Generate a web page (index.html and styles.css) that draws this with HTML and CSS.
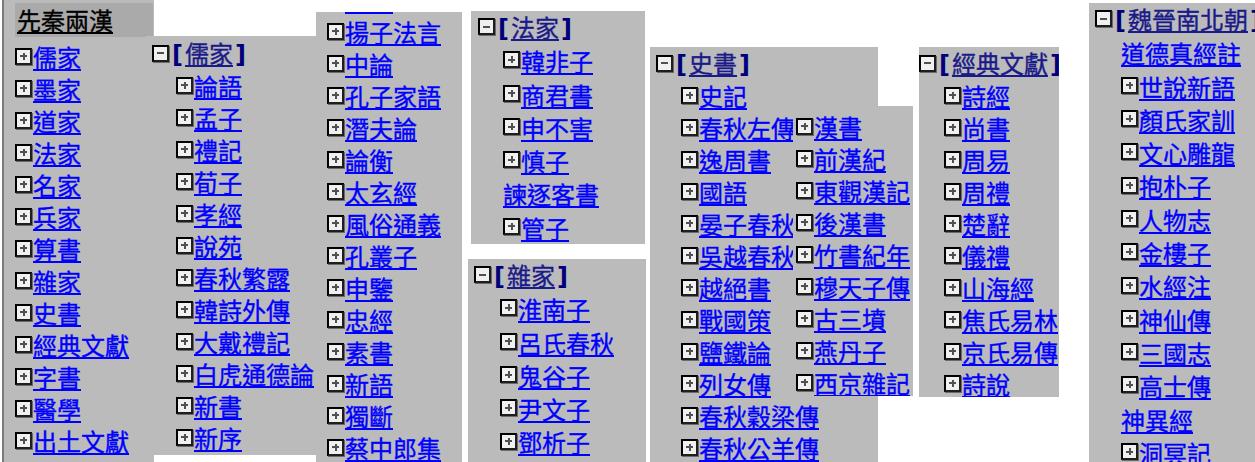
FILE: index.html
```html
<!DOCTYPE html>
<html lang="zh-Hant">
<head>
<meta charset="utf-8">
<title>先秦兩漢</title>
<link rel="stylesheet" href="styles.css">
</head>
<body>
<div class="stage">

  <div class="panel p-a">
    <div class="era"><a class="era-link">先秦兩漢</a></div>
    <div class="list">
      <div class="row"><span class="box plus"></span><a>儒家</a></div>
      <div class="row"><span class="box plus"></span><a>墨家</a></div>
      <div class="row"><span class="box plus"></span><a>道家</a></div>
      <div class="row"><span class="box plus"></span><a>法家</a></div>
      <div class="row"><span class="box plus"></span><a>名家</a></div>
      <div class="row"><span class="box plus"></span><a>兵家</a></div>
      <div class="row"><span class="box plus"></span><a>算書</a></div>
      <div class="row"><span class="box plus"></span><a>雜家</a></div>
      <div class="row"><span class="box plus"></span><a>史書</a></div>
      <div class="row"><span class="box plus"></span><a>經典文獻</a></div>
      <div class="row"><span class="box plus"></span><a>字書</a></div>
      <div class="row"><span class="box plus"></span><a>醫學</a></div>
      <div class="row"><span class="box plus"></span><a>出土文獻</a></div>
    </div>
  </div>

  <div class="panel p-b">
    <div class="row head"><span class="box minus"></span><b class="br">[<a>儒家</a>]</b></div>
    <div class="sub">
      <div class="row"><span class="box plus"></span><a>論語</a></div>
      <div class="row"><span class="box plus"></span><a>孟子</a></div>
      <div class="row"><span class="box plus"></span><a>禮記</a></div>
      <div class="row"><span class="box plus"></span><a>荀子</a></div>
      <div class="row"><span class="box plus"></span><a>孝經</a></div>
      <div class="row"><span class="box plus"></span><a>說苑</a></div>
      <div class="row"><span class="box plus"></span><a>春秋繁露</a></div>
      <div class="row"><span class="box plus"></span><a>韓詩外傳</a></div>
      <div class="row"><span class="box plus"></span><a>大戴禮記</a></div>
      <div class="row"><span class="box plus"></span><a>白虎通德論</a></div>
      <div class="row"><span class="box plus"></span><a>新書</a></div>
      <div class="row"><span class="box plus"></span><a>新序</a></div>
    </div>
  </div>

  <div class="panel p-c">
    <div class="scroll">
      <div class="row"><span class="box plus"></span><a>法言</a></div>
      <div class="row"><span class="box plus"></span><a>揚子法言</a></div>
      <div class="row"><span class="box plus"></span><a>中論</a></div>
      <div class="row"><span class="box plus"></span><a>孔子家語</a></div>
      <div class="row"><span class="box plus"></span><a>潛夫論</a></div>
      <div class="row"><span class="box plus"></span><a>論衡</a></div>
      <div class="row"><span class="box plus"></span><a>太玄經</a></div>
      <div class="row"><span class="box plus"></span><a>風俗通義</a></div>
      <div class="row"><span class="box plus"></span><a>孔叢子</a></div>
      <div class="row"><span class="box plus"></span><a>申鑒</a></div>
      <div class="row"><span class="box plus"></span><a>忠經</a></div>
      <div class="row"><span class="box plus"></span><a>素書</a></div>
      <div class="row"><span class="box plus"></span><a>新語</a></div>
      <div class="row"><span class="box plus"></span><a>獨斷</a></div>
      <div class="row"><span class="box plus"></span><a>蔡中郎集</a></div>
    </div>
  </div>

  <div class="col-de">
    <div class="panel p-d tall">
      <div class="row head"><span class="box minus"></span><b class="br">[<a>法家</a>]</b></div>
      <div class="sub">
        <div class="row"><span class="box plus"></span><a>韓非子</a></div>
        <div class="row"><span class="box plus"></span><a>商君書</a></div>
        <div class="row"><span class="box plus"></span><a>申不害</a></div>
        <div class="row"><span class="box plus"></span><a>慎子</a></div>
        <div class="row"><a>諫逐客書</a></div>
        <div class="row"><span class="box plus"></span><a>管子</a></div>
      </div>
    </div>
    <div class="panel p-e tall">
      <div class="row head"><span class="box minus"></span><b class="br">[<a>雜家</a>]</b></div>
      <div class="sub">
        <div class="row"><span class="box plus"></span><a>淮南子</a></div>
        <div class="row"><span class="box plus"></span><a>呂氏春秋</a></div>
        <div class="row"><span class="box plus"></span><a>鬼谷子</a></div>
        <div class="row"><span class="box plus"></span><a>尹文子</a></div>
        <div class="row"><span class="box plus"></span><a>鄧析子</a></div>
      </div>
    </div>
  </div>

  <div class="panel p-f">
    <div class="row head"><span class="box minus"></span><b class="br">[<a>史書</a>]</b></div>
    <div class="sub">
      <div class="row"><span class="box plus"></span><a>史記</a></div>
      <div class="row"><span class="box plus"></span><a>春秋左傳</a></div>
      <div class="row"><span class="box plus"></span><a>逸周書</a></div>
      <div class="row"><span class="box plus"></span><a>國語</a></div>
      <div class="row"><span class="box plus"></span><a>晏子春秋</a></div>
      <div class="row"><span class="box plus"></span><a>吳越春秋</a></div>
      <div class="row"><span class="box plus"></span><a>越絕書</a></div>
      <div class="row"><span class="box plus"></span><a>戰國策</a></div>
      <div class="row"><span class="box plus"></span><a>鹽鐵論</a></div>
      <div class="row"><span class="box plus"></span><a>列女傳</a></div>
      <div class="row"><span class="box plus"></span><a>春秋穀梁傳</a></div>
      <div class="row"><span class="box plus"></span><a>春秋公羊傳</a></div>
    </div>
  </div>

  <div class="panel p-g">
    <div class="row"><span class="box plus"></span><a>漢書</a></div>
    <div class="row"><span class="box plus"></span><a>前漢紀</a></div>
    <div class="row"><span class="box plus"></span><a>東觀漢記</a></div>
    <div class="row"><span class="box plus"></span><a>後漢書</a></div>
    <div class="row"><span class="box plus"></span><a>竹書紀年</a></div>
    <div class="row"><span class="box plus"></span><a>穆天子傳</a></div>
    <div class="row"><span class="box plus"></span><a>古三墳</a></div>
    <div class="row"><span class="box plus"></span><a>燕丹子</a></div>
    <div class="row"><span class="box plus"></span><a>西京雜記</a></div>
  </div>

  <div class="panel p-h">
    <div class="row head"><span class="box minus"></span><b class="br">[<a>經典文獻</a>]</b></div>
    <div class="sub">
      <div class="row"><span class="box plus"></span><a>詩經</a></div>
      <div class="row"><span class="box plus"></span><a>尚書</a></div>
      <div class="row"><span class="box plus"></span><a>周易</a></div>
      <div class="row"><span class="box plus"></span><a>周禮</a></div>
      <div class="row"><span class="box plus"></span><a>楚辭</a></div>
      <div class="row"><span class="box plus"></span><a>儀禮</a></div>
      <div class="row"><span class="box plus"></span><a>山海經</a></div>
      <div class="row"><span class="box plus"></span><a>焦氏易林</a></div>
      <div class="row"><span class="box plus"></span><a>京氏易傳</a></div>
      <div class="row"><span class="box plus"></span><a>詩說</a></div>
    </div>
  </div>

  <div class="panel p-i tall">
    <div class="row head"><span class="box minus"></span><b class="br">[<a>魏晉南北朝</a>]</b></div>
    <div class="sub">
      <div class="row"><a>道德真經註</a></div>
      <div class="row"><span class="box plus"></span><a>世說新語</a></div>
      <div class="row"><span class="box plus"></span><a>顏氏家訓</a></div>
      <div class="row"><span class="box plus"></span><a>文心雕龍</a></div>
      <div class="row"><span class="box plus"></span><a>抱朴子</a></div>
      <div class="row"><span class="box plus"></span><a>人物志</a></div>
      <div class="row"><span class="box plus"></span><a>金樓子</a></div>
      <div class="row"><span class="box plus"></span><a>水經注</a></div>
      <div class="row"><span class="box plus"></span><a>神仙傳</a></div>
      <div class="row"><span class="box plus"></span><a>三國志</a></div>
      <div class="row"><span class="box plus"></span><a>高士傳</a></div>
      <div class="row"><a>神異經</a></div>
      <div class="row"><span class="box plus"></span><a>洞冥記</a></div>
    </div>
  </div>

</div>
</body>
</html>
```

FILE: styles.css
```css
html, body {
  margin: 0;
  padding: 0;
  background: #ffffff;
}

body {
  font-family: "Noto Sans CJK TC", "Noto Sans CJK SC", "Noto Sans", sans-serif;
  font-size: 24px;
}

.stage {
  display: flex;
  align-items: flex-start;
  width: 1255px;
  height: 462px;
  overflow: hidden;
}

.panel {
  background: #bbbbbb;
  flex-shrink: 0;
  overflow: hidden;
  box-sizing: border-box;
}

.row {
  display: flex;
  align-items: center;
  height: 32px;
  line-height: 32px;
  white-space: nowrap;
}

.tall .row {
  height: 33.3px;
  line-height: 33.3px;
}

a {
  color: #0000ff;
  text-decoration: underline;
  text-decoration-thickness: 2px;
  text-underline-offset: 2px;
  -webkit-text-stroke: 0.35px currentColor;
}

.box {
  flex-shrink: 0;
  width: 13px;
  height: 13px;
  margin-top: -2px;
  border: 2px solid;
  border-color: #000000 #1e1e1e #1e1e1e #000000;
  box-shadow: 1px 1px 0 #6a6a6a;
  background: linear-gradient(#505050, #505050) center / 7px 2px no-repeat, #f0f0f0;
  margin-right: 1px;
}

.box.plus {
  background:
    linear-gradient(#505050, #505050) center / 7px 2px no-repeat,
    linear-gradient(#505050, #505050) center / 2px 7px no-repeat,
    #f0f0f0;
}

.br {
  font-family: "DejaVu Sans", "Noto Sans CJK TC", sans-serif;
  color: #00007a;
  font-weight: bold;
  margin-left: 2px;
}

.br a {
  font-family: "Noto Sans CJK TC", "Noto Sans CJK SC", sans-serif;
  color: #1a1a88;
  font-weight: normal;
  margin: 0 2px;
}

/* Panel A: era menu */
.p-a {
  margin-left: 2px;
  border-left: 2px solid #7a7a7a;
  width: 152px;
  height: 462px;
}

.era {
  margin: 3px 1px 0 11px;
  height: 34px;
  line-height: 34px;
  background: #aaaaaa;
  padding-left: 2px;
}

.era-link {
  color: #000000;
}

.list {
  margin-top: 4px;
  padding-left: 11px;
}

/* Panel B: 儒家 */
.p-b {
  margin-left: -8px;
  margin-top: 36px;
  width: 170px;
  height: 419px;
  padding: 2px 0 0 6px;
}

.p-b .sub { padding-left: 24px; }

/* Panel C: scrolled continuation */
.p-c {
  margin-top: 12px;
  width: 146px;
  height: 450px;
  padding-left: 11px;
}

.scroll { margin-top: -28px; }

/* Column with 法家 and 雜家 */
.col-de {
  flex-shrink: 0;
  display: flex;
  flex-direction: column;
  margin-left: 6px;
  width: 178px;
}

.p-d {
  margin: 11px 1px 0 3px;
  height: 233px;
  padding-left: 7px;
}

.p-d .sub { padding-left: 25px; }

.p-e {
  margin-top: 15px;
  height: 203px;
  padding-left: 6px;
}

.p-e .sub { padding-left: 26px; }

/* Panel F: 史書 */
.p-f {
  margin-left: 4px;
  margin-top: 47px;
  width: 228px;
  height: 415px;
  padding: 1px 0 0 6px;
}

.p-f .sub { padding-left: 25px; }

/* Panel G: 漢書 column */
.p-g {
  margin-left: -85px;
  margin-top: 106px;
  width: 120px;
  height: 290px;
  padding: 5px 0 0 3px;
}

/* Panel H: 經典文獻 */
.p-h {
  margin-left: 6px;
  margin-top: 47px;
  width: 140px;
  height: 350px;
  padding-top: 1px;
}

.p-h .sub { padding-left: 25px; }

/* Panel I: 魏晉南北朝 */
.p-i {
  margin-left: 30px;
  margin-top: 3px;
  width: 220px;
  height: 459px;
  padding-left: 6px;
}

.p-i .sub { padding-left: 26px; }
```
